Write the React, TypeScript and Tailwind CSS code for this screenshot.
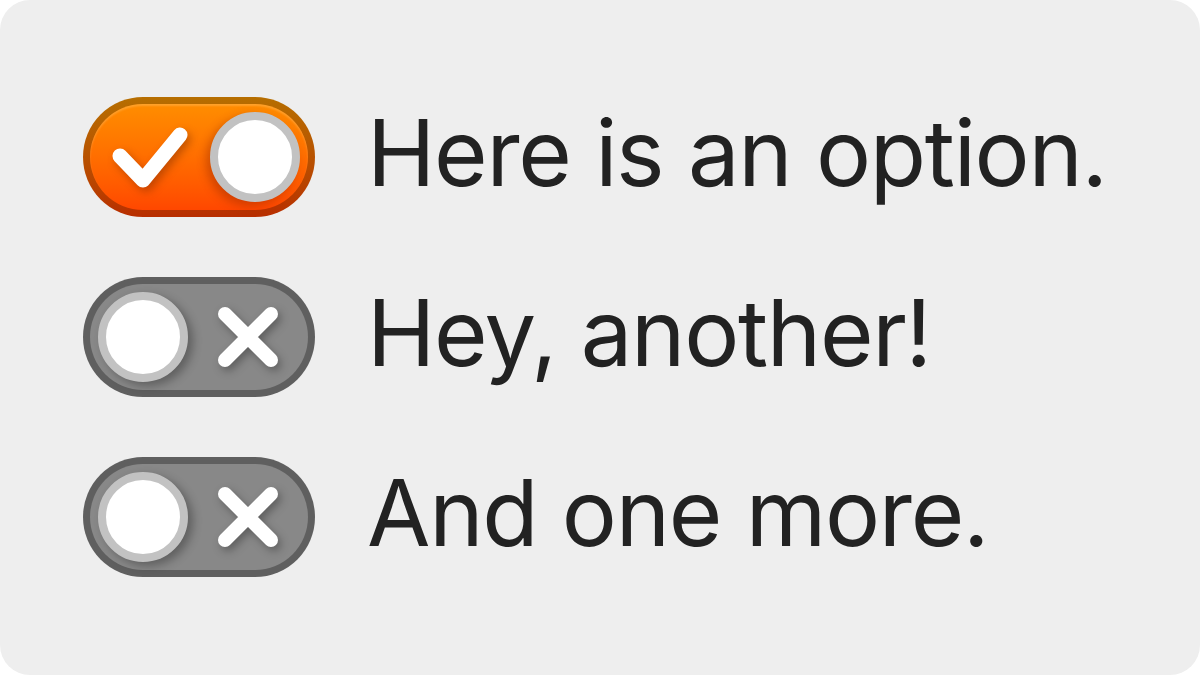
import React from "react";

function Check() {
  return (
    <svg width="90" height="80" viewBox="0 0 90 80" className="drop-shadow-[3px_4px_4px_rgba(120,40,0,0.45)]">
      <path d="M11 39 L34 63 L71 18" fill="none" stroke="#ffffff" strokeWidth="15" strokeLinecap="round" strokeLinejoin="round" />
    </svg>
  );
}

function Cross() {
  return (
    <svg width="80" height="80" viewBox="0 0 80 80" className="drop-shadow-[3px_4px_4px_rgba(0,0,0,0.3)]">
      <path d="M17 17 L63 63 M63 17 L17 63" fill="none" stroke="#ffffff" strokeWidth="14" strokeLinecap="round" />
    </svg>
  );
}

function Knob({ on }: { on: boolean }) {
  return (
    <div
      className={
        "w-[90px] h-[90px] shrink-0 rounded-full bg-white border-[8px] border-[#c2c2c2] " +
        (on
          ? "shadow-[-4px_4px_10px_rgba(150,40,0,0.45)]"
          : "shadow-[5px_4px_10px_rgba(0,0,0,0.3)]")
      }
    />
  );
}

function Toggle({ on }: { on: boolean }) {
  return (
    <div
      className={
        "w-[232px] h-[120px] shrink-0 rounded-full p-[7px] " +
        (on
          ? "bg-gradient-to-b from-[#b66e00] to-[#b82e00]"
          : "bg-[#5f5f5f]")
      }
    >
      <div
        className={
          "w-full h-full rounded-full flex items-center px-[8px] " +
          (on
            ? "bg-gradient-to-b from-[#ff8d00] to-[#ff4700] shadow-[inset_0_2px_2px_rgba(255,200,120,0.35)]"
            : "bg-[#888888]")
        }
      >
        {on ? (
          <>
            <div className="flex-1 flex items-center justify-center">
              <Check />
            </div>
            <Knob on />
          </>
        ) : (
          <>
            <Knob on={false} />
            <div className="flex-1 flex items-center justify-center pl-[8px]">
              <Cross />
            </div>
          </>
        )}
      </div>
    </div>
  );
}

function Row({ on, label }: { on: boolean; label: string }) {
  return (
    <div className="flex items-center gap-[52px] h-[120px]">
      <Toggle on={on} />
      <span
        className="text-[#222222] text-[92px] leading-none tracking-[-1.3px] whitespace-nowrap pb-[8px]"
        style={{ fontFamily: "Inter, 'Noto Sans', sans-serif" }}
      >
        {label}
      </span>
    </div>
  );
}

export default function App() {
  return (
    <div className="w-[1200px] h-[675px] bg-white">
      <div className="w-full h-full rounded-[30px] bg-[#eeeeee] flex flex-col gap-[60px] pt-[97px] pl-[83px]">
        <Row on label="Here is an option." />
        <Row on={false} label="Hey, another!" />
        <Row on={false} label="And one more." />
      </div>
    </div>
  );
}
